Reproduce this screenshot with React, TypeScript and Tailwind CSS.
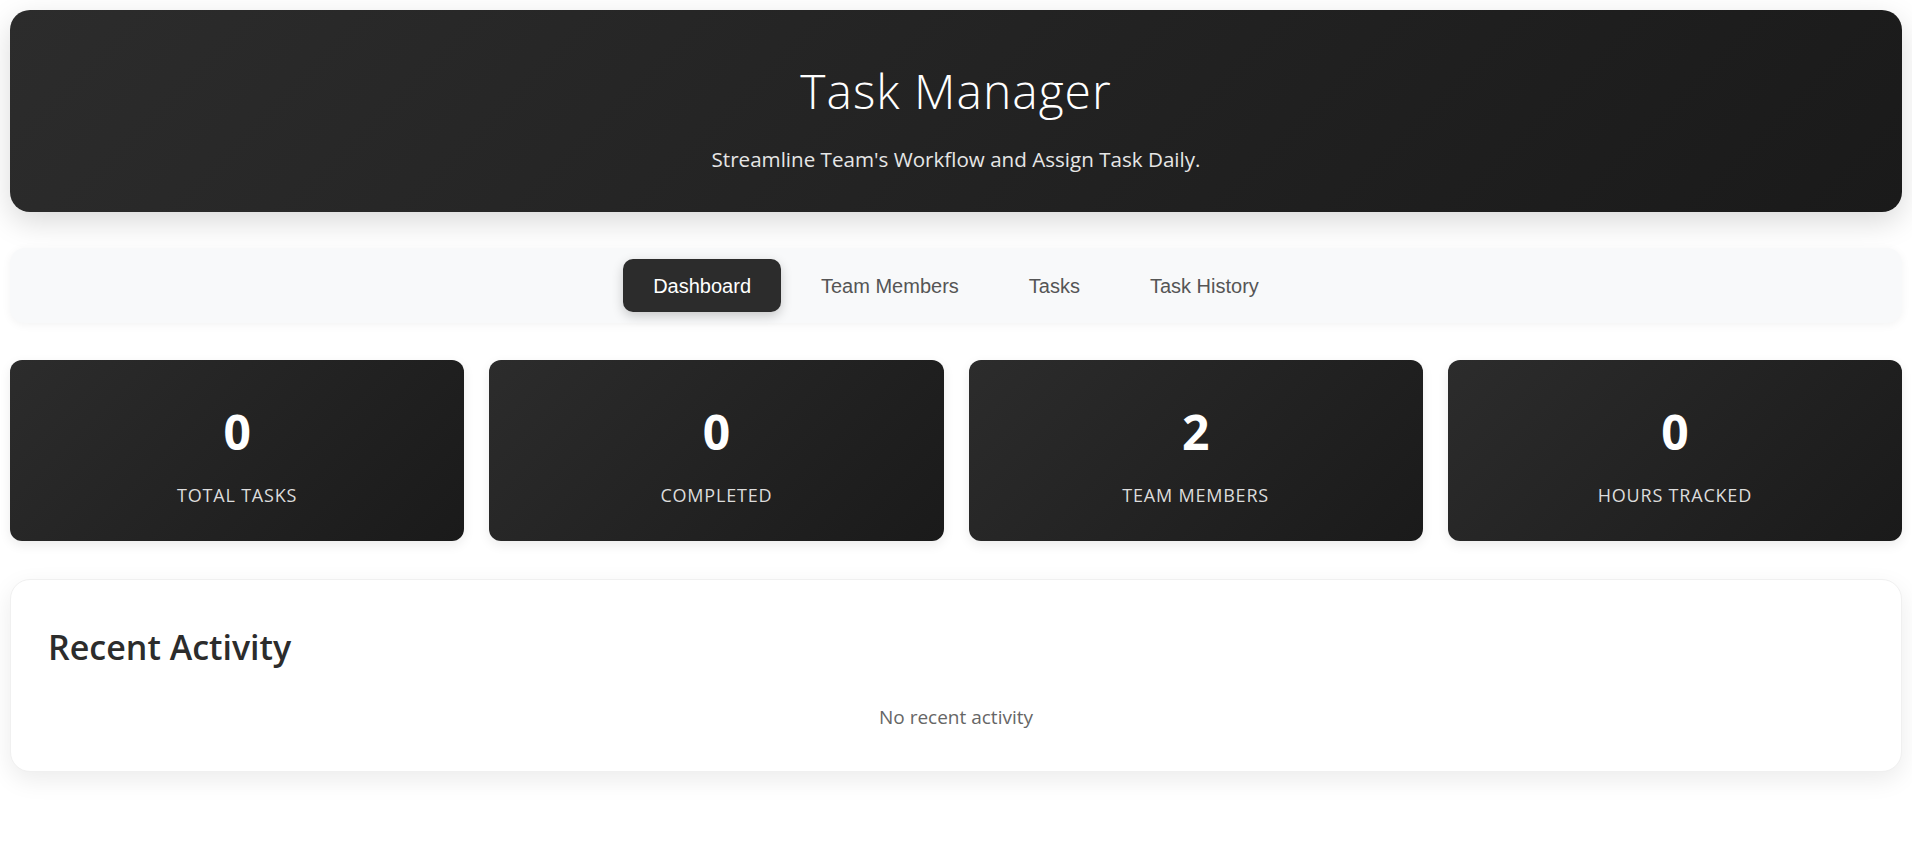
const tabs = ["Dashboard", "Team Members", "Tasks", "Task History"];

const stats = [
  { value: "0", label: "Total Tasks" },
  { value: "0", label: "Completed" },
  { value: "2", label: "Team Members" },
  { value: "0", label: "Hours Tracked" },
];

const StatCard = ({ value, label }: { value: string; label: string }) => {
  return (
    <div className="flex flex-col items-center rounded-xl bg-linear-135 from-[#2c2c2c] to-[#1a1a1a] pt-[43px] pb-[32px] text-center shadow-[0_4px_12px_rgba(0,0,0,0.08)]">
      <p className="text-[48px] font-bold leading-[1.2] text-white">{value}</p>
      <p className="mt-[21px] text-[18px] uppercase leading-[1.5] tracking-[0.8px] text-[#dcdcdc]">
        {label}
      </p>
    </div>
  );
};

export default function App() {
  return (
    <div className="min-h-screen bg-white p-[10px] font-['Open_Sans',sans-serif]">
      <header className="rounded-[20px] bg-linear-135 from-[#2c2c2c] to-[#1a1a1a] pt-[52px] pb-[38px] text-center shadow-[0_10px_30px_rgba(0,0,0,0.15)]">
        <h1 className="text-[48px] font-light leading-[1.2] tracking-[1px] text-white">Task Manager</h1>
        <p className="mt-[24px] text-[20.6px] leading-[1.5] text-[#e6e6e6]">
          Streamline Team's Workflow and Assign Task Daily.
        </p>
      </header>

      <nav className="mt-[36px] flex h-[75px] items-center justify-center gap-[10px] rounded-[15px] bg-[#f8f9fa] shadow-[0_2px_10px_rgba(0,0,0,0.05)]">
        {tabs.map((tab, i) => (
          <button
            key={tab}
            className={
              i === 0
                ? "flex h-[53px] items-center rounded-[10px] bg-[#2c2c2c] px-[30px] font-['Liberation_Sans',Arial,sans-serif] text-[20px] text-white shadow-[0_4px_12px_rgba(0,0,0,0.2)]"
                : "flex h-[53px] items-center rounded-[10px] px-[30px] font-['Liberation_Sans',Arial,sans-serif] text-[20px] text-[#555555]"
            }
          >
            {tab}
          </button>
        ))}
      </nav>

      <section className="mt-[37px] grid grid-cols-4 gap-[25px]">
        {stats.map((s) => (
          <StatCard key={s.label} value={s.value} label={s.label} />
        ))}
      </section>

      <section className="mt-[38px] rounded-[20px] border border-[#f0f0f0] bg-white px-[37px] pt-[47px] pb-[40px] shadow-[0_8px_25px_rgba(0,0,0,0.08)]">
        <h2 className="text-[34px] font-semibold leading-[1.2] text-[#2c2c2c]">Recent Activity</h2>
        <p className="mt-[35px] text-center text-[19px] leading-[1.5] text-[#666666]">
          No recent activity
        </p>
      </section>
    </div>
  );
}
